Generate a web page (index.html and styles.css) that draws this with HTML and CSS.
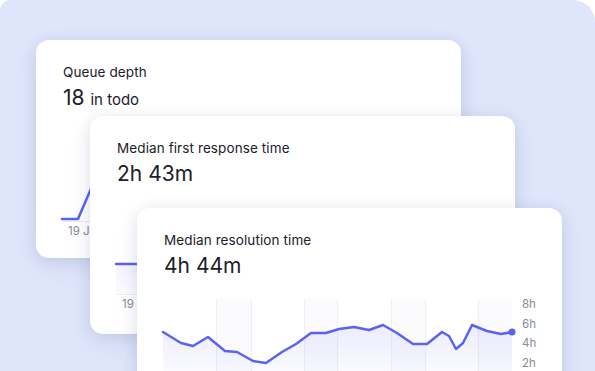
FILE: index.html
```html
<!DOCTYPE html>
<html lang="en">
<head>
    <meta charset="UTF-8">
    <meta name="viewport" content="width=device-width, initial-scale=1.0">
    <title>Metrics</title>
    <link rel="stylesheet" href="styles.css">
</head>
<body>
    <div class="panel">

        <!-- queue depth -->
        <div class="card card-queue">
            <p class="card-title">Queue depth</p>
            <p class="card-value">18 <span class="unit">in todo</span></p>
            <div class="chart">
                <svg class="plot" width="372" height="89" viewBox="0 0 372 89">
                    <line class="base" x1="0" y1="88.5" x2="372" y2="88.5" />
                    <polyline class="trend" points="0,86 16,86 28,58 44,18 60,6" />
                </svg>
            </div>
            <p class="tick">19 Jan</p>
        </div>

        <!-- first response -->
        <div class="card card-first">
            <p class="card-title">Median first response time</p>
            <p class="card-value">2h 43m</p>
            <div class="chart">
                <svg class="plot" width="372" height="88" viewBox="0 0 372 88">
                    <defs>
                        <linearGradient id="fill2" x1="0" y1="0" x2="0" y2="1">
                            <stop offset="0" stop-color="#6d72f4" stop-opacity="0.08" />
                            <stop offset="1" stop-color="#6d72f4" stop-opacity="0.02" />
                        </linearGradient>
                    </defs>
                    <polygon fill="url(#fill2)" points="0,57 60,57 60,88 0,88" />
                    <line class="base" x1="0" y1="87.5" x2="372" y2="87.5" />
                    <polyline class="trend" points="0,57 60,57" />
                </svg>
            </div>
            <p class="tick">19 Jan</p>
        </div>

        <!-- resolution -->
        <div class="card card-resolution">
            <p class="card-title">Median resolution time</p>
            <p class="card-value">4h 44m</p>
            <div class="chart">
                <svg class="plot" width="349" height="90" viewBox="0 0 349 90">
                    <defs>
                        <linearGradient id="fill3" x1="0" y1="0" x2="0" y2="1">
                            <stop offset="0" stop-color="#6d72f4" stop-opacity="0.13" />
                            <stop offset="1" stop-color="#6d72f4" stop-opacity="0" />
                        </linearGradient>
                    </defs>
                    <rect class="band" x="53" y="0" width="35" height="90" />
                    <rect class="band" x="141" y="0" width="33" height="90" />
                    <rect class="band" x="228" y="0" width="34" height="90" />
                    <rect class="band" x="315" y="0" width="34" height="90" />
                    <line class="grid" x1="53.5" y1="0" x2="53.5" y2="90" />
                    <line class="grid" x1="88.5" y1="0" x2="88.5" y2="90" />
                    <line class="grid" x1="141.5" y1="0" x2="141.5" y2="90" />
                    <line class="grid" x1="174.5" y1="0" x2="174.5" y2="90" />
                    <line class="grid" x1="228.5" y1="0" x2="228.5" y2="90" />
                    <line class="grid" x1="262.5" y1="0" x2="262.5" y2="90" />
                    <line class="grid" x1="315.5" y1="0" x2="315.5" y2="90" />
                    <polygon fill="url(#fill3)" points="0,33 18,44 30,47 45,38 62,52 74,53 90,62 103,64 119,53 133,45 148,34 163,34 176,30 191,28 206,31 220,26 234,34 250,45 264,45 279,33 286,37 293,50 300,44 309,26 324,32 338,35 349,33 349,90 0,90" />
                    <polyline class="trend" points="0,33 18,44 30,47 45,38 62,52 74,53 90,62 103,64 119,53 133,45 148,34 163,34 176,30 191,28 206,31 220,26 234,34 250,45 264,45 279,33 286,37 293,50 300,44 309,26 324,32 338,35 349,33" />
                    <circle class="dot" cx="349" cy="33" r="3.5" />
                </svg>
                <div class="axis">
                    <span>8h</span>
                    <span>6h</span>
                    <span>4h</span>
                    <span>2h</span>
                </div>
            </div>
        </div>

    </div>
</body>
</html>
```

FILE: styles.css
```css
    body{
        margin: 0;
        background: #ffffff;
        font-family: Inter, "Noto Sans", sans-serif;
        color: #1d202b;
    }
    .panel{
        position: relative;
        width: 595px;
        height: 371px;
        background-color: #dfe6fb;
        border-radius: 10px 22px 0 0;
        overflow: hidden;
    }
    .card{
        position: absolute;
        width: 425px;
        height: 218px;
        box-sizing: border-box;
        padding: 24px 26px 0 27px;
        background: #ffffff;
        border-radius: 13px;
        box-shadow: 0 2px 14px rgba(40, 55, 120, 0.10), 0 8px 24px rgba(40, 55, 120, 0.08);
        overflow: hidden;
    }
    .card-queue{
        left: 36px;
        top: 40px;
    }
    .card-first{
        left: 90px;
        top: 116px;
    }
    .card-resolution{
        left: 137px;
        top: 208px;
    }
    .card-title{
        margin: 0;
        font-size: 13.5px;
        line-height: 16px;
        font-weight: 400;
        letter-spacing: 0.1px;
    }
    .card-value{
        margin: 5px 0 0;
        font-size: 21px;
        line-height: 26px;
        font-weight: 400;
    }
    .card-value .unit{
        font-size: 15px;
    }
    .chart{
        display: flex;
        align-items: flex-start;
        gap: 10px;
        margin-top: 20px;
        margin-left: -1px;
    }
    .plot{
        display: block;
        overflow: visible;
    }
    .trend{
        fill: none;
        stroke: #5b62f2;
        stroke-width: 2.5;
        stroke-linejoin: round;
        stroke-linecap: round;
    }
    .dot{
        fill: #5b62f2;
    }
    .base{
        stroke: #eceef3;
        stroke-width: 1;
    }
    .grid{
        stroke: #eef0f5;
        stroke-width: 1;
    }
    .band{
        fill: #fbfbfe;
    }
    .axis{
        display: flex;
        flex-direction: column;
        margin-top: -4px;
        font-size: 11.5px;
        line-height: 19.6px;
        color: #858a99;
    }
    .tick{
        margin: 2px 0 0 5px;
        font-size: 11.5px;
        line-height: 14px;
        color: #858a99;
    }
```
